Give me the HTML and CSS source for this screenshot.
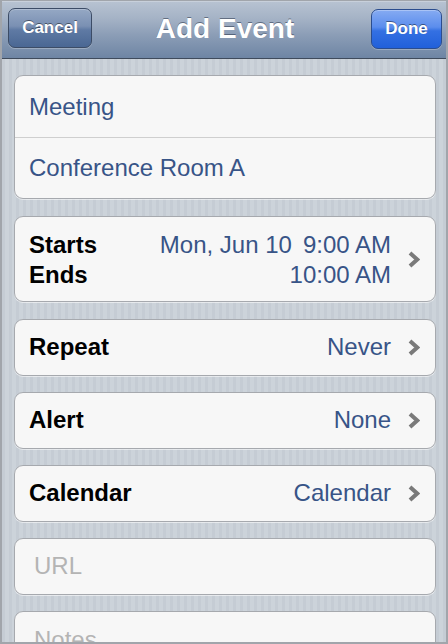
FILE: index.html
```html
<!DOCTYPE html>
<html>
<head>
<meta charset="utf-8">
<title>Add Event</title>
<link rel="stylesheet" href="styles.css">
</head>
<body>
<div class="screen">
  <header class="navbar">
    <button class="nav-btn cancel">Cancel</button>
    <h1 class="title">Add Event</h1>
    <button class="nav-btn done">Done</button>
  </header>
  <main class="content">
    <section class="group g-title">
      <div class="row field">Meeting</div>
      <div class="row field divided">Conference Room A</div>
    </section>

    <section class="group g-dates">
      <div class="row dates">
        <div class="labels">
          <span>Starts</span>
          <span>Ends</span>
        </div>
        <div class="times">
          <div class="start"><span>Mon, Jun 10</span><span>9:00 AM</span></div>
          <div class="end">10:00 AM</div>
        </div>
        <svg class="chev" viewBox="0 0 12 17" width="12" height="17"><path d="M2 2 L9.2 8.5 L2 15" /></svg>
      </div>
    </section>

    <section class="group single">
      <div class="row">
        <span class="label">Repeat</span>
        <span class="value">Never</span>
        <svg class="chev" viewBox="0 0 12 17" width="12" height="17"><path d="M2 2 L9.2 8.5 L2 15" /></svg>
      </div>
    </section>

    <section class="group single">
      <div class="row">
        <span class="label">Alert</span>
        <span class="value">None</span>
        <svg class="chev" viewBox="0 0 12 17" width="12" height="17"><path d="M2 2 L9.2 8.5 L2 15" /></svg>
      </div>
    </section>

    <section class="group single">
      <div class="row">
        <span class="label">Calendar</span>
        <span class="value">Calendar</span>
        <svg class="chev" viewBox="0 0 12 17" width="12" height="17"><path d="M2 2 L9.2 8.5 L2 15" /></svg>
      </div>
    </section>

    <section class="group single">
      <div class="row placeholder">URL</div>
    </section>

    <section class="group notes">
      <div class="row placeholder notes-text">Notes</div>
    </section>
  </main>
</div>
</body>
</html>
```
FILE: styles.css
```css
* { box-sizing: border-box; }

html, body {
  margin: 0;
  padding: 0;
}

body {
  width: 448px;
  height: 644px;
  overflow: hidden;
  font-family: "Liberation Sans", Arial, Helvetica, sans-serif;
  background: #a3a7ad;
}

.screen {
  width: 448px;
  height: 644px;
  overflow: hidden;
  border-style: solid;
  border-color: #a1a5ab;
  border-width: 1px 2px 2px 2px;
  background-color: #c9d0d7;
  background-image: repeating-linear-gradient(90deg, #c5ccd4 0px, #c5ccd4 3px, #ccd3da 3px, #ccd3da 7px);
  display: flex;
  flex-direction: column;
}

/* Navigation bar */
.navbar {
  height: 58px;
  flex: none;
  display: grid;
  grid-template-columns: 1fr auto 1fr;
  align-items: start;
  padding: 7px 4px 0 6px;
  border-bottom: 1px solid #3f4b5c;
  background: linear-gradient(#b8c3d2 0%, #a5b3c6 30%, #8b9db6 60%, #6e85a4 100%);
  box-shadow: inset 0 1px 0 #c8d0db;
}

.title {
  margin: 0;
  font-size: 28px;
  font-weight: bold;
  line-height: 41px;
  color: #fff;
  text-shadow: 0 -1px 0 rgba(40, 50, 70, 0.55);
}

.nav-btn {
  height: 40px;
  margin: 0;
  padding: 0;
  border-radius: 7px;
  font-family: "Liberation Sans", Arial, sans-serif;
  font-size: 17px;
  font-weight: bold;
  color: #fff;
  text-shadow: 0 -1px 0 rgba(0, 0, 0, 0.45);
  cursor: pointer;
}

.cancel {
  justify-self: start;
  width: 84px;
  border: 1px solid #3c4c66;
  background: linear-gradient(#95a8c4 0%, #7a90b3 45%, #5f7aa4 55%, #4a6793 100%);
  box-shadow: inset 0 1px 0 rgba(255, 255, 255, 0.25), 0 1px 0 rgba(255, 255, 255, 0.25);
}

.done {
  justify-self: end;
  width: 71px;
  margin-top: 1px;
  border: 1px solid #2b4d8e;
  background: linear-gradient(#86abf2 0%, #5b8ded 45%, #3470e2 55%, #2160da 100%);
  box-shadow: inset 0 1px 0 rgba(255, 255, 255, 0.3), 0 1px 0 rgba(255, 255, 255, 0.25);
}

/* Content */
.content {
  flex: 1;
  padding: 16px 10px 0 12px;
  display: flex;
  flex-direction: column;
}

.group {
  flex: none;
  background: #f7f7f7;
  border: 1px solid #a6a9ae;
  border-radius: 9px;
  box-shadow: 0 1px 0 rgba(255, 255, 255, 0.55);
  overflow: hidden;
}

.g-title { margin-bottom: 17px; }
.g-dates { margin-bottom: 17px; }
.single { margin-bottom: 16.5px; }

.row {
  display: flex;
  align-items: center;
  padding: 0 15px 0 14px;
  font-size: 24px;
  color: #000;
}

.field {
  height: 61px;
  color: #385487;
}

.divided {
  border-top: 1px solid #cfcfcf;
}

.dates {
  height: 84px;
  line-height: 30px;
}

.labels {
  flex: 1;
  display: flex;
  flex-direction: column;
  font-weight: bold;
  padding-top: 1px;
}

.times {
  display: flex;
  flex-direction: column;
  align-items: flex-end;
  color: #385487;
  padding-top: 1px;
}

.start {
  display: flex;
  gap: 11px;
}

.single .row {
  height: 54.5px;
}

.label {
  flex: 1;
  font-weight: bold;
}

.value {
  color: #385487;
}

.chev {
  flex: none;
  margin-left: 17px;
}

.chev path {
  fill: none;
  stroke: #7a7a7a;
  stroke-width: 4;
  stroke-linejoin: miter;
  stroke-linecap: butt;
}

.placeholder {
  color: #b4b4b4;
  padding-left: 19px;
}

.notes {
  height: 120px;
}

.notes-text {
  align-items: flex-start;
  padding-top: 14px;
}
```
